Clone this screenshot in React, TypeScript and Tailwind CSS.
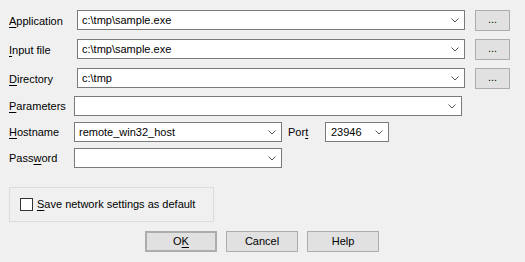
import React from 'react';

const font = { fontFamily: '"Segoe UI", "Liberation Sans", Arial, sans-serif' };

function Chevron() {
  return (
    <svg width="8" height="5" viewBox="0 0 8 5" className="shrink-0">
      <path d="M0.5 0.5 L4 4 L7.5 0.5" fill="none" stroke="#555" strokeWidth="1" />
    </svg>
  );
}

function Combo({ value, className }: { value?: string; className: string }) {
  return (
    <div className={`flex h-[20px] items-center justify-between border border-[#7a7a7a] bg-white pl-[4px] pr-[5px] ${className}`}>
      <span className="whitespace-nowrap text-[11px] leading-none text-black">{value}</span>
      <Chevron />
    </div>
  );
}

function U({ children }: { children: React.ReactNode }) {
  return <span className="underline underline-offset-2">{children}</span>;
}

function Label({ children, className }: { children: React.ReactNode; className: string }) {
  return <div className={`shrink-0 whitespace-nowrap text-[11px] text-black ${className}`}>{children}</div>;
}

function Btn({ children, className }: { children: React.ReactNode; className?: string }) {
  return (
    <div className={`flex h-[21px] items-center justify-center border border-[#adadad] bg-[#e1e1e1] text-[11px] text-black ${className ?? ''}`}>
      {children}
    </div>
  );
}

export default function App() {
  return (
    <div style={font} className="h-[262px] w-[525px] bg-[#f0f0f0] pl-[9px] pt-[10px]">
      {/* file rows */}
      <div className="flex h-[21px] items-start">
        <Label className="w-[68px] pt-[3px]"><U>A</U>pplication</Label>
        <Combo value="c:\tmp\sample.exe" className="w-[388px]" />
        <Btn className="ml-[10px] w-[35px] pb-[3px]">...</Btn>
      </div>
      <div className="mt-[8px] flex h-[21px] items-start">
        <Label className="w-[68px] pt-[3px]"><U>I</U>nput file</Label>
        <Combo value="c:\tmp\sample.exe" className="w-[388px]" />
        <Btn className="ml-[10px] w-[35px] pb-[3px]">...</Btn>
      </div>
      <div className="mt-[8px] flex h-[21px] items-start">
        <Label className="w-[68px] pt-[3px]"><U>D</U>irectory</Label>
        <Combo value="c:\tmp" className="w-[388px]" />
        <Btn className="ml-[10px] w-[35px] pb-[3px]">...</Btn>
      </div>

      {/* remote rows */}
      <div className="mt-[7px] flex items-center">
        <Label className="w-[65px]"><U>P</U>arameters</Label>
        <Combo className="w-[388px]" />
      </div>
      <div className="mt-[6px] flex items-center">
        <Label className="w-[65px]"><U>H</U>ostname</Label>
        <Combo value="remote_win32_host" className="w-[208px]" />
        <Label className="ml-[6px] w-[37px]">Por<U>t</U></Label>
        <Combo value="23946" className="w-[64px] pl-[5px]" />
      </div>
      <div className="mt-[6px] flex items-center">
        <Label className="w-[65px]">Pass<U>w</U>ord</Label>
        <Combo className="w-[208px]" />
      </div>

      {/* group box */}
      <div className="mt-[19px] flex h-[35px] w-[205px] items-center border border-[#dcdcdc] pl-[10px]">
        <div className="h-[13px] w-[13px] shrink-0 border border-[#333] bg-white" />
        <span className="ml-[4px] whitespace-nowrap text-[11px] text-black"><U>S</U>ave network settings as default</span>
      </div>

      {/* buttons */}
      <div className="mt-[9px] flex gap-[9px] pl-[136px]">
        <Btn className="w-[72px] border-2 border-[#0078d7]">O<U>K</U></Btn>
        <Btn className="w-[72px]">Cancel</Btn>
        <Btn className="w-[72px]">Help</Btn>
      </div>
    </div>
  );
}
